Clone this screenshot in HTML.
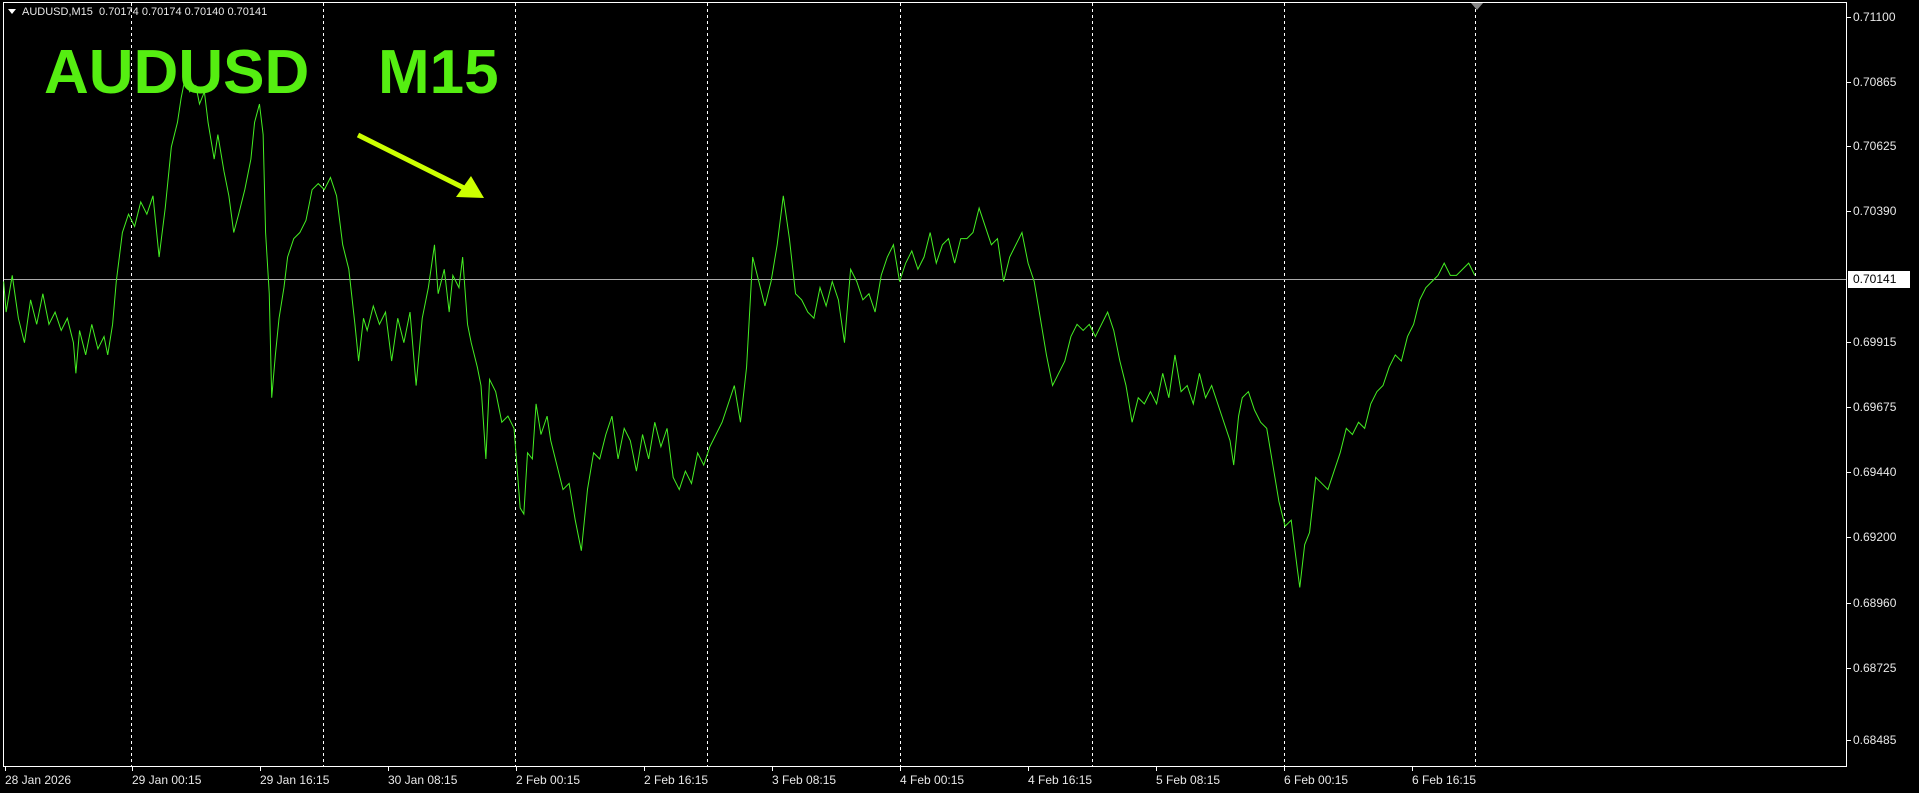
<!DOCTYPE html>
<html><head><meta charset="utf-8"><style>
html,body{margin:0;padding:0;background:#000;width:1919px;height:793px;overflow:hidden;font-family:"Liberation Sans","DejaVu Sans",sans-serif}
.t{position:absolute;color:#e8e8e8;font-size:12px;white-space:nowrap}
</style></head><body>
<svg width="1919" height="793" style="position:absolute;left:0;top:0">
<rect x="3.5" y="2.5" width="1843" height="764" fill="none" stroke="#fff" stroke-width="1"/>
<g stroke="#fff" stroke-dasharray="3,3" stroke-width="1">
<line x1="131.5" y1="3" x2="131.5" y2="766"/><line x1="323.5" y1="3" x2="323.5" y2="766"/>
<line x1="515.5" y1="3" x2="515.5" y2="766"/><line x1="707.5" y1="3" x2="707.5" y2="766"/>
<line x1="900.5" y1="3" x2="900.5" y2="766"/><line x1="1092.5" y1="3" x2="1092.5" y2="766"/>
<line x1="1284.5" y1="3" x2="1284.5" y2="766"/><line x1="1475.5" y1="3" x2="1475.5" y2="766"/>
</g>
<line x1="4" y1="279.5" x2="1846" y2="279.5" stroke="#aaa"/>
<polygon points="1471,3 1483,3 1477,10" fill="#888"/>
<g stroke="#fff">
<line x1="1847" y1="17.5" x2="1851" y2="17.5"/><line x1="1847" y1="82.5" x2="1851" y2="82.5"/>
<line x1="1847" y1="146.5" x2="1851" y2="146.5"/><line x1="1847" y1="211.5" x2="1851" y2="211.5"/>
<line x1="1847" y1="342.5" x2="1851" y2="342.5"/><line x1="1847" y1="407.5" x2="1851" y2="407.5"/>
<line x1="1847" y1="472.5" x2="1851" y2="472.5"/><line x1="1847" y1="537.5" x2="1851" y2="537.5"/>
<line x1="1847" y1="603.5" x2="1851" y2="603.5"/><line x1="1847" y1="668.5" x2="1851" y2="668.5"/>
<line x1="1847" y1="740.5" x2="1851" y2="740.5"/>
<line x1="5.5" y1="767" x2="5.5" y2="771"/><line x1="132.5" y1="767" x2="132.5" y2="771"/><line x1="260.5" y1="767" x2="260.5" y2="771"/><line x1="388.5" y1="767" x2="388.5" y2="771"/><line x1="516.5" y1="767" x2="516.5" y2="771"/><line x1="644.5" y1="767" x2="644.5" y2="771"/><line x1="772.5" y1="767" x2="772.5" y2="771"/><line x1="900.5" y1="767" x2="900.5" y2="771"/><line x1="1028.5" y1="767" x2="1028.5" y2="771"/><line x1="1156.5" y1="767" x2="1156.5" y2="771"/><line x1="1284.5" y1="767" x2="1284.5" y2="771"/><line x1="1412.5" y1="767" x2="1412.5" y2="771"/>
</g>
<g transform="scale(1.2239)">
<polyline fill="none" stroke="#44ee22" stroke-width="1" vector-effect="non-scaling-stroke" points="3,230 5,255 10,225 15,260 20,280 25,245 30,265 35,240 40,265 45,255 50,270 55,260 60,280 62,305 65,270 70,290 75,265 80,285 85,275 88,290 92,265 95,230 100,190 105,175 110,185 115,165 120,175 125,160 130,210 135,170 140,120 145,100 148,80 152,60 155,75 160,70 163,85 167,75 170,100 175,130 178,110 183,140 187,160 191,190 195,175 200,155 205,130 208,100 212,85 215,110 217,190 220,240 222,325 225,290 228,260 232,235 235,210 240,195 245,190 250,180 255,155 260,150 265,155 270,145 275,160 280,200 285,220 290,265 293,295 297,260 300,270 305,250 310,265 315,255 320,295 325,260 330,280 335,255 340,315 345,260 350,235 355,200 358,240 363,220 367,255 370,225 375,235 378,210 382,265 385,280 390,300 393,315 397,375 400,310 405,320 410,345 415,340 420,350 425,415 428,420 431,370 435,375 438,330 442,355 447,340 450,360 455,380 460,400 465,395 470,425 475,450 480,400 485,370 490,375 495,355 500,340 505,375 510,350 515,360 520,385 525,355 530,375 535,345 540,365 545,350 550,390 555,400 560,385 565,395 570,370 575,380 580,365 585,355 590,345 595,330 600,315 605,345 610,300 615,210 620,230 625,250 630,230 635,200 640,160 645,195 650,240 655,245 660,255 665,260 670,235 675,250 680,230 685,245 690,280 695,220 700,230 705,245 710,240 715,255 720,225 725,210 730,200 735,230 740,215 745,205 750,220 755,210 760,190 765,215 770,200 775,195 780,215 785,195 790,195 795,190 800,170 805,185 810,200 815,195 820,230 825,210 830,200 835,190 840,215 845,230 850,260 855,290 860,315 865,305 870,295 875,275 880,265 885,270 890,265 895,275 900,265 905,255 910,270 915,295 920,315 925,345 930,325 935,330 940,320 945,330 950,305 955,325 960,290 965,320 970,315 975,330 980,305 985,325 990,315 995,330 1000,345 1005,360 1008,380 1012,340 1015,325 1020,320 1025,335 1030,345 1035,350 1040,380 1045,410 1050,430 1055,425 1060,465 1062,480 1066,445 1070,435 1075,390 1080,395 1085,400 1090,385 1095,370 1100,350 1105,355 1110,345 1115,350 1120,330 1125,320 1130,315 1135,300 1140,290 1145,295 1150,275 1155,265 1160,245 1165,235 1170,230 1175,225 1180,215 1185,225 1190,225 1195,220 1200,215 1205,225"/>
</g>
<line x1="358" y1="135" x2="466" y2="189" stroke="#ccff00" stroke-width="5"/>
<polygon points="484,198 456,197 471,176" fill="#ccff00"/>
<text x="44" y="93" font-family="Liberation Sans" font-weight="bold" font-size="62" fill="#55ee11">AUDUSD</text>
<text x="378" y="93" font-family="Liberation Sans" font-weight="bold" font-size="62" fill="#55ee11">M15</text>
<polygon points="8,9 16,9 12,14" fill="#fff"/>
<rect x="1848" y="271" width="62" height="17" fill="#fff"/>
</svg>
<div class="t" style="left:22px;top:6px;font-size:11px">AUDUSD,M15&nbsp; 0.70174 0.70174 0.70140 0.70141</div>
<div class="t" style="left:1853px;top:10px">0.71100</div>
<div class="t" style="left:1853px;top:75px">0.70865</div>
<div class="t" style="left:1853px;top:139px">0.70625</div>
<div class="t" style="left:1853px;top:204px">0.70390</div>
<div class="t" style="left:1853px;top:272px;color:#000">0.70141</div>
<div class="t" style="left:1853px;top:335px">0.69915</div>
<div class="t" style="left:1853px;top:400px">0.69675</div>
<div class="t" style="left:1853px;top:465px">0.69440</div>
<div class="t" style="left:1853px;top:530px">0.69200</div>
<div class="t" style="left:1853px;top:596px">0.68960</div>
<div class="t" style="left:1853px;top:661px">0.68725</div>
<div class="t" style="left:1853px;top:733px">0.68485</div>
<div class="t" style="left:5px;top:773px">28 Jan 2026</div>
<div class="t" style="left:132px;top:773px">29 Jan 00:15</div>
<div class="t" style="left:260px;top:773px">29 Jan 16:15</div>
<div class="t" style="left:388px;top:773px">30 Jan 08:15</div>
<div class="t" style="left:516px;top:773px">2 Feb 00:15</div>
<div class="t" style="left:644px;top:773px">2 Feb 16:15</div>
<div class="t" style="left:772px;top:773px">3 Feb 08:15</div>
<div class="t" style="left:900px;top:773px">4 Feb 00:15</div>
<div class="t" style="left:1028px;top:773px">4 Feb 16:15</div>
<div class="t" style="left:1156px;top:773px">5 Feb 08:15</div>
<div class="t" style="left:1284px;top:773px">6 Feb 00:15</div>
<div class="t" style="left:1412px;top:773px">6 Feb 16:15</div>
</body></html>
